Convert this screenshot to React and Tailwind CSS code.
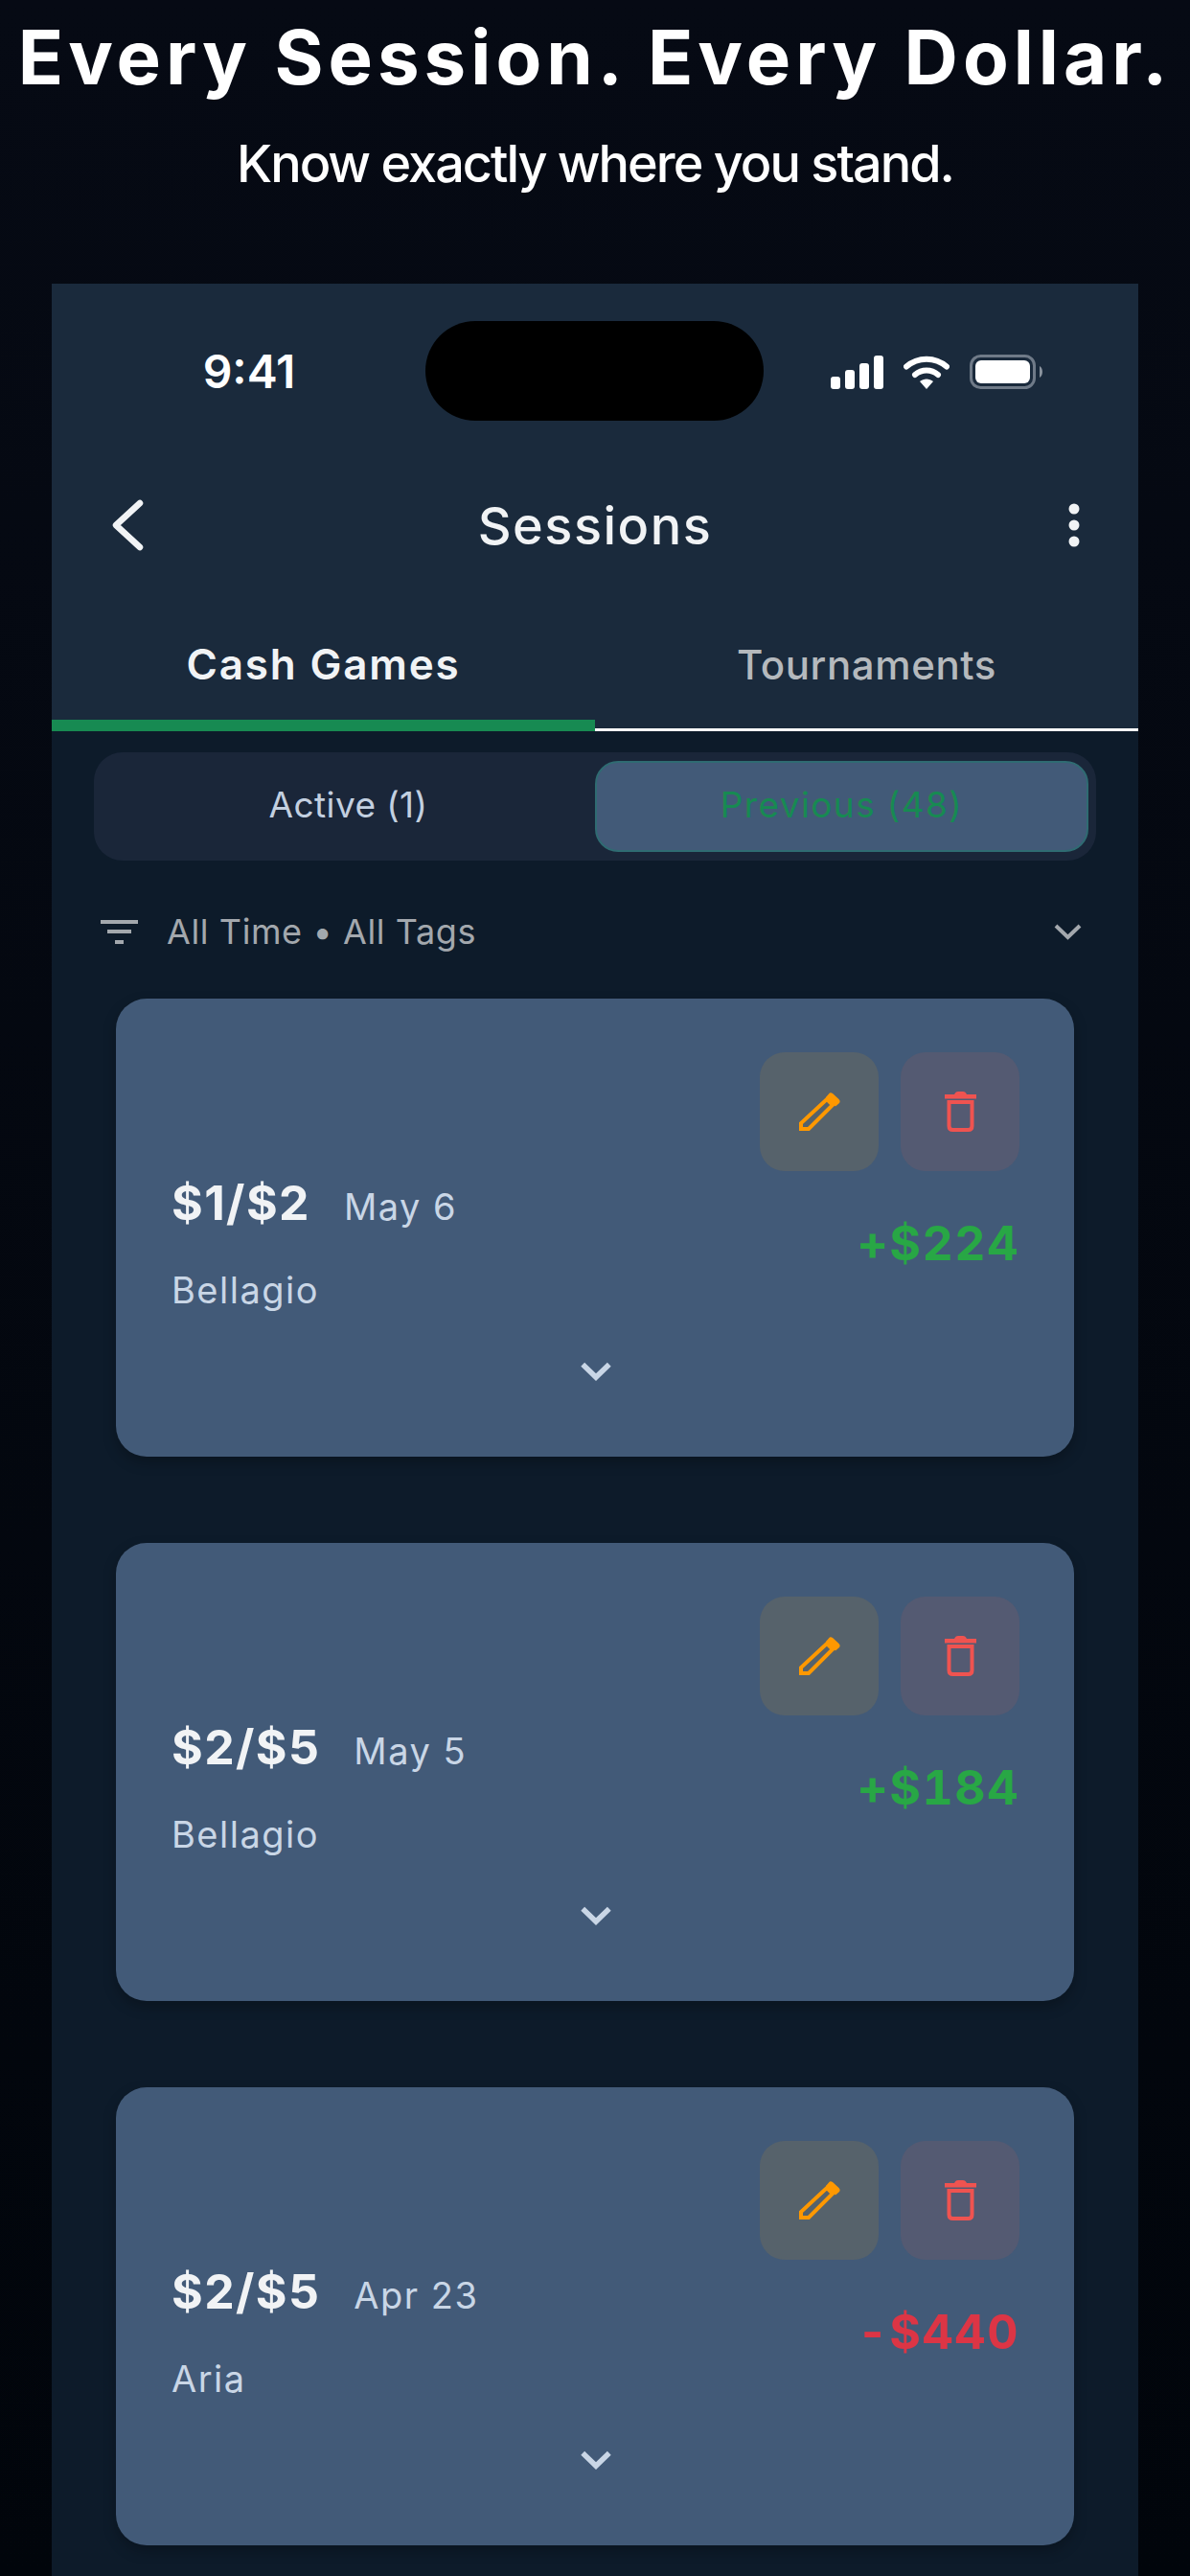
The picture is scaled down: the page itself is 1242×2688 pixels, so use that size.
import React from "react";

const FONT = "font-['Inter','Noto_Sans',sans-serif]";

const SESSIONS = [
  { stakes: "$1/$2", date: "May 6", venue: "Bellagio", amount: "+$224", win: true },
  { stakes: "$2/$5", date: "May 5", venue: "Bellagio", amount: "+$184", win: true },
  { stakes: "$2/$5", date: "Apr 23", venue: "Aria", amount: "-$440", win: false },
];

// ── Icons ─────────────────────────────────────────────────────────────────────

const SignalIcon = () => (
  <svg width="55" height="35" viewBox="0 0 55 35" fill="#fff">
    <rect x="0" y="22" width="10" height="13" rx="3" />
    <rect x="15" y="15" width="10" height="20" rx="3" />
    <rect x="30" y="8" width="10" height="27" rx="3" />
    <rect x="45" y="0" width="10" height="35" rx="3" />
  </svg>
);

const WifiIcon = () => (
  <svg width="48" height="35" viewBox="0 0 48 35" fill="none" stroke="#fff">
    <path d="M3 11.5C15 1 33 1 45 11.5" strokeWidth="6" strokeLinecap="round" />
    <path d="M12 20C19 14 29 14 36 20" strokeWidth="6" strokeLinecap="round" />
    <path d="M17 27C21 23.5 27 23.5 31 27L24 35Z" fill="#fff" stroke="none" />
  </svg>
);

const BatteryIcon = () => (
  <svg width="77" height="36" viewBox="0 0 77 36" fill="none">
    <rect x="1.5" y="1.5" width="66" height="33" rx="10" stroke="#6f7a88" strokeWidth="3" />
    <rect x="6" y="6" width="57" height="24" rx="6" fill="#fff" />
    <path d="M73 12C77 14 77 22 73 24Z" fill="#8a939e" />
  </svg>
);

const BackIcon = () => (
  <svg width="36" height="54" viewBox="0 0 36 54" fill="none" stroke="#f1f3f5" strokeWidth="6.5" strokeLinecap="round" strokeLinejoin="round">
    <path d="M31 4L6 27L31 50" />
  </svg>
);

const KebabIcon = () => (
  <svg width="12" height="46" viewBox="0 0 12 46" fill="#f1f3f5">
    <circle cx="6" cy="6" r="5.5" />
    <circle cx="6" cy="23" r="5.5" />
    <circle cx="6" cy="40" r="5.5" />
  </svg>
);

const FilterIcon = () => (
  <svg width="39" height="25" viewBox="0 0 39 25" fill="#a3a8ad">
    <rect x="0" y="0" width="39" height="4" />
    <rect x="7" y="10" width="25" height="4" />
    <rect x="15" y="21" width="9" height="4" />
  </svg>
);

const Chevron = ({ color, width = 29, height = 17, stroke = 4 }) => (
  <svg width={width} height={height} viewBox="0 0 29 17" fill="none" stroke={color} strokeWidth={stroke}>
    <path d="M2 2L14.5 14L27 2" />
  </svg>
);

const PencilIcon = () => (
  <svg width="43" height="43" viewBox="0 0 43 43" fill="none">
    <path d="M29 8L35 14L10 39H2V33Z" stroke="#ff9800" strokeWidth="4" strokeLinejoin="miter" />
    <path d="M31 2.5C32 0.8 33.5 0.8 35 2L41.5 8C43 9.5 43 11 41.5 12.5L38 15.5L28 6Z" fill="#ff9800" />
  </svg>
);

const TrashIcon = () => (
  <svg width="33" height="42" viewBox="0 0 33 42" fill="none">
    <path d="M0 3H10C11 1 12 0 14 0H19C21 0 22 1 23 3H33V7.5H0Z" fill="#ef5350" />
    <path d="M4.5 11H28.5V36C28.5 38.5 27 40 24.5 40H8.5C6 40 4.5 38.5 4.5 36Z" stroke="#ef5350" strokeWidth="4" />
  </svg>
);

// ── Session card ──────────────────────────────────────────────────────────────

const SessionCard = ({ stakes, date, venue, amount, win }) => (
  <div className="w-[1000px] h-[478px] mx-auto rounded-[32px] bg-[#425a78] pt-[56px] pl-[58px] pr-[57px] shadow-[0_6px_14px_rgba(0,0,0,0.25)] flex flex-col">
    <div className="flex justify-between">
      <div className="pt-[127px]">
        <div className="flex items-baseline">
          <span className="text-[50px] leading-[60px] font-bold tracking-[1.4px] text-[#f1f3f5]">{stakes}</span>
          <span className="ml-[35px] text-[38px] leading-[60px] tracking-[1.5px] text-[#c9d6e6]">{date}</span>
        </div>
        <div className="mt-[34px] text-[38px] leading-[46px] tracking-[1.5px] text-[#c9d6e6]">{venue}</div>
      </div>
      <div className="flex flex-col items-end">
        <div className="flex gap-[23px]">
          <button className="w-[124px] h-[124px] rounded-[26px] bg-[#56626b] flex items-center justify-center">
            <PencilIcon />
          </button>
          <button className="w-[124px] h-[124px] rounded-[26px] bg-[#545a72] flex items-center justify-center">
            <TrashIcon />
          </button>
        </div>
        <div className={`mt-[45px] text-[50px] leading-[60px] font-bold tracking-[1.5px] tabular-nums ${win ? "text-[#28a745]" : "text-[#dc3545]"}`}>
          {amount}
        </div>
      </div>
    </div>
    <div className="mt-[52px] flex justify-center">
      <Chevron color="#c9d6e6" width={32} height={20} stroke={5} />
    </div>
  </div>
);

// ── App ───────────────────────────────────────────────────────────────────────

export default function App() {
  return (
    <div className={`w-[1242px] h-[2688px] overflow-hidden flex flex-col bg-[linear-gradient(to_bottom,#060a14,#01050b)] ${FONT}`}>
      <div className="h-[296px] shrink-0 flex flex-col items-center">
        <h1 className="mt-[16px] text-[78px] leading-[88px] font-bold tracking-[5px] whitespace-nowrap text-white">
          Every Session. Every Dollar.
        </h1>
        <p className="mt-[36px] text-[54px] leading-[62px] font-medium tracking-[-2px] text-white">Know exactly where you stand.</p>
      </div>

      <div className="w-[1134px] mx-auto flex-1 flex flex-col bg-[#0d1b2a]">
        <div className="bg-[#1a2a3c]">
          {/* status bar */}
          <div className="h-[143px] relative">
            <div className="w-[390px] flex justify-center pt-[61px] pl-[22px]">
              <span className="text-[48px] leading-[62px] font-semibold text-white">9:41</span>
            </div>
            <div className="absolute left-[390px] top-[39px] w-[353px] h-[104px] rounded-[52px] bg-black" />
            <div className="absolute left-[813px] top-[74px] flex items-center gap-[21px]">
              <SignalIcon />
              <WifiIcon />
              <BatteryIcon />
            </div>
          </div>

          {/* nav bar */}
          <div className="h-[106px] mt-[56px] px-[61px] flex items-center justify-between">
            <div className="w-[60px]">
              <BackIcon />
            </div>
            <span className="pt-[2px] text-[54px] leading-[64px] font-medium tracking-[1.5px] text-[#f1f3f5]">Sessions</span>
            <div className="w-[60px] flex justify-end">
              <KebabIcon />
            </div>
          </div>

          {/* tabs */}
          <div className="grid grid-cols-2 h-[162px]">
            <div className="relative flex items-center justify-center pt-[22px]">
              <span className="text-[44px] font-semibold tracking-[1.8px] text-[#f1f3f5]">Cash Games</span>
              <div className="absolute left-0 right-0 bottom-0 h-[12px] bg-[#178a52]" />
            </div>
            <div className="relative flex items-center justify-center pt-[22px]">
              <span className="text-[42px] font-medium tracking-[0.6px] text-[#b5b9bd]">Tournaments</span>
              <div className="absolute left-0 right-0 bottom-0 h-[3px] bg-white" />
            </div>
          </div>
        </div>

        {/* active / previous */}
        <div className="mt-[22px] mx-[44px] h-[113px] rounded-[30px] bg-[#1a2639] pl-[8px] pr-[8px] grid grid-cols-2 items-center">
          <div className="text-center text-[37px] tracking-[0.4px] pb-[3px] text-[#c3d0e0]">Active (1)</div>
          <div className="h-[95px] rounded-[24px] bg-[#425a78] border-[2px] border-[#2f6b72] flex items-center justify-center pb-[3px] text-[37px] tracking-[1.4px] text-[#178a52]">
            Previous (48)
          </div>
        </div>

        {/* filter row */}
        <div className="mt-[50px] h-[48px] pl-[51px] pr-[59px] flex items-center">
          <FilterIcon />
          <span className="ml-[30px] text-[36px] tracking-[0.6px] text-[#a3a8ad]">All Time • All Tags</span>
          <div className="ml-auto">
            <Chevron color="#a3a8ad" />
          </div>
        </div>

        {/* cards */}
        <div className="mt-[46px] flex flex-col gap-[90px]">
          {SESSIONS.map((s, i) => (
            <SessionCard key={i} {...s} />
          ))}
        </div>
      </div>
    </div>
  );
}
